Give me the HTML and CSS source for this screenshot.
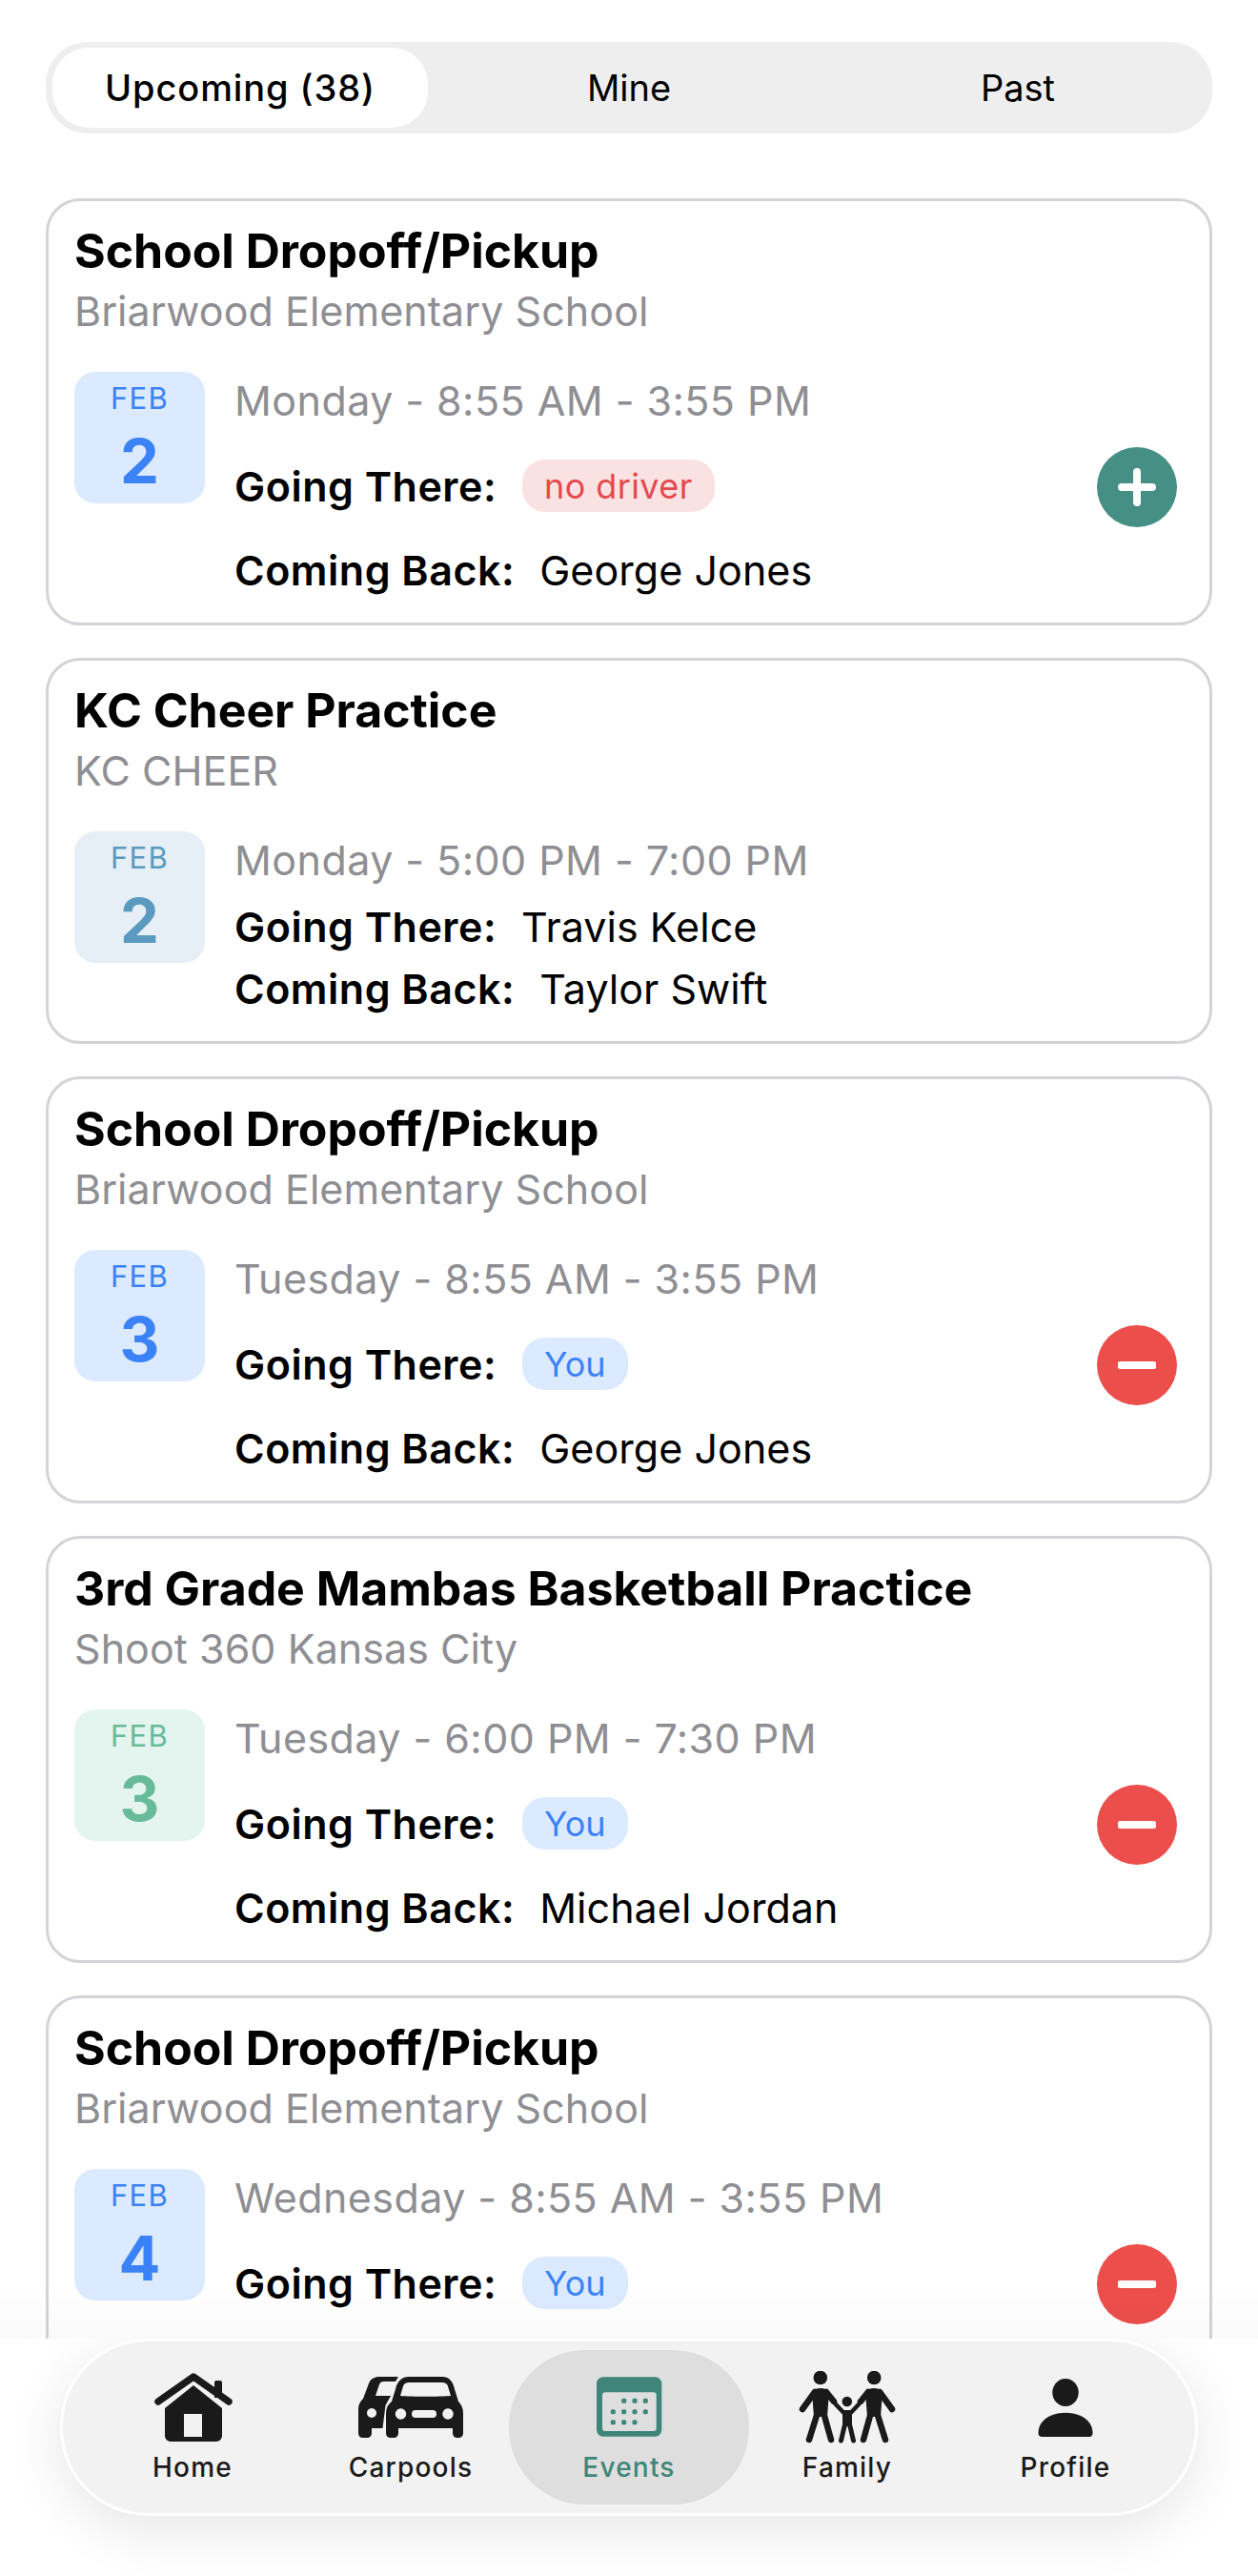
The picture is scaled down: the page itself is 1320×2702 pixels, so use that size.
FILE: index.html
```html
<!DOCTYPE html>
<html lang="en">
<head>
<meta charset="utf-8">
<title>Events</title>
<link rel="stylesheet" href="styles.css">
</head>
<body>
<div class="app">
  <main class="scroll">
    <nav class="segment">
      <div class="seg-item active">Upcoming (38)</div>
      <div class="seg-item">Mine</div>
      <div class="seg-item">Past</div>
    </nav>
    <div class="cards">
      <article class="card">
        <h2 class="title">School Dropoff/Pickup</h2>
        <p class="place">Briarwood Elementary School</p>
        <div class="body">
          <div class="date blue"><span class="mon">FEB</span><span class="day">2</span></div>
          <div class="info tall">
            <div class="when">Monday - 8:55 AM - 3:55 PM</div>
            <div class="row"><b>Going There:</b><span class="pill red">no driver</span></div>
            <div class="row"><b>Coming Back:</b><span class="name">George Jones</span></div>
          </div>
          <button class="act add"><svg viewBox="0 0 40 40" width="40" height="40"><path d="M4 20h32M20 4v32"/></svg></button>
        </div>
      </article>
      <article class="card">
        <h2 class="title">KC Cheer Practice</h2>
        <p class="place">KC CHEER</p>
        <div class="body">
          <div class="date steel"><span class="mon">FEB</span><span class="day">2</span></div>
          <div class="info">
            <div class="when">Monday - 5:00 PM - 7:00 PM</div>
            <div class="row"><b>Going There:</b><span class="name">Travis Kelce</span></div>
            <div class="row"><b>Coming Back:</b><span class="name">Taylor Swift</span></div>
          </div>
        </div>
      </article>
      <article class="card">
        <h2 class="title">School Dropoff/Pickup</h2>
        <p class="place">Briarwood Elementary School</p>
        <div class="body">
          <div class="date blue"><span class="mon">FEB</span><span class="day">3</span></div>
          <div class="info tall">
            <div class="when">Tuesday - 8:55 AM - 3:55 PM</div>
            <div class="row"><b>Going There:</b><span class="pill you">You</span></div>
            <div class="row"><b>Coming Back:</b><span class="name">George Jones</span></div>
          </div>
          <button class="act remove"><svg viewBox="0 0 40 40" width="40" height="40"><path d="M3 20h34"/></svg></button>
        </div>
      </article>
      <article class="card">
        <h2 class="title">3rd Grade Mambas Basketball Practice</h2>
        <p class="place">Shoot 360 Kansas City</p>
        <div class="body">
          <div class="date green"><span class="mon">FEB</span><span class="day">3</span></div>
          <div class="info tall">
            <div class="when">Tuesday - 6:00 PM - 7:30 PM</div>
            <div class="row"><b>Going There:</b><span class="pill you">You</span></div>
            <div class="row"><b>Coming Back:</b><span class="name">Michael Jordan</span></div>
          </div>
          <button class="act remove"><svg viewBox="0 0 40 40" width="40" height="40"><path d="M3 20h34"/></svg></button>
        </div>
      </article>
      <article class="card under-tabbar">
        <h2 class="title">School Dropoff/Pickup</h2>
        <p class="place">Briarwood Elementary School</p>
        <div class="body">
          <div class="date blue"><span class="mon">FEB</span><span class="day">4</span></div>
          <div class="info tall">
            <div class="when">Wednesday - 8:55 AM - 3:55 PM</div>
            <div class="row"><b>Going There:</b><span class="pill you">You</span></div>
          </div>
          <button class="act remove"><svg viewBox="0 0 40 40" width="40" height="40"><path d="M3 20h34"/></svg></button>
        </div>
      </article>
    </div>
  </main>
  <footer class="footer">
    <nav class="tabbar">
      <a class="tab">
        <svg class="ico" viewBox="0 0 90 80" width="90" height="80"><path fill="#1a1a1a" fill-rule="evenodd" d="M16 39 46 15 76 39V68a6 6 0 0 1-6 6H22a6 6 0 0 1-6-6ZM36 45V69H55V45Z"/><path fill="#1a1a1a" d="M68 12a2 2 0 0 1 2-2h4a2 2 0 0 1 2 2V28H68Z"/><path fill="none" stroke="#1a1a1a" stroke-width="7.500" stroke-linecap="round" stroke-linejoin="round" d="M9 32 46 6 83 32"/></svg>
        <span>Home</span>
      </a>
      <a class="tab">
        <svg class="ico" viewBox="0 0 110 80" width="110" height="80"><path fill="#1a1a1a" fill-rule="evenodd" d="M0 65V40C0 35 2 32 5 29L11 13C13 8 17 6 22 6H42L39 11H27C24 11 23 12 22 14L18 26H34L28.500 36 25.500 60H14V65C14 68 12 70 9 70H5C2 70 0 68 0 65ZM14 39a5 5 0 1 0 .01 0Z"/><path fill="#1a1a1a" fill-rule="evenodd" d="M29 44C29 39 31 35 35 32L39 19C41 10 46 6 53 6H88C95 6 99 10 101 19L105 32C108 35 110 39 110 44V65C110 68 108 70 105 70H104C101 70 99 68 99 65V60H42V65C42 68 40 70 37 70H34C31 70 29 68 29 65ZM53 12C50 12 48 13 47 16L44 26C55 27 86 27 97 26L94 16C93 13 91 12 88 12ZM44.500 39.300a5.700 5.700 0 1 0 .01 0ZM94 39.300a5.700 5.700 0 1 0 .01 0ZM60 41a4 4 0 0 0 0 8H78a4 4 0 0 0 0-8Z"/></svg>
        <span>Carpools</span>
      </a>
      <a class="tab current">
        <svg class="ico" viewBox="0 0 80 80" width="80" height="80"><path fill="#3f8579" fill-rule="evenodd" d="M13 6.300H67.300a7 7 0 0 1 7 7V61.700a7 7 0 0 1-7 7H13a7 7 0 0 1-7-7V13.300a7 7 0 0 1 7-7ZM15 22.300a3 3 0 0 0-3 3V60a3 3 0 0 0 3 3H65.700a3 3 0 0 0 3-3V25.300a3 3 0 0 0-3-3Z"/><g fill="#3f8579"><rect x="32.200" y="28.800" width="5" height="5" rx="1.500"/><rect x="43.500" y="28.800" width="5" height="5" rx="1.500"/><rect x="54.800" y="28.800" width="5" height="5" rx="1.500"/><rect x="20.800" y="40.200" width="5" height="5" rx="1.500"/><rect x="32.200" y="40.200" width="5" height="5" rx="1.500"/><rect x="43.500" y="40.200" width="5" height="5" rx="1.500"/><rect x="54.800" y="40.200" width="5" height="5" rx="1.500"/><rect x="20.800" y="51.200" width="5" height="5" rx="1.500"/><rect x="32.200" y="51.200" width="5" height="5" rx="1.500"/><rect x="43.500" y="51.200" width="5" height="5" rx="1.500"/></g></svg>
        <span>Events</span>
      </a>
      <a class="tab">
        <svg class="ico" viewBox="0 0 104 80" width="104" height="80"><g fill="#1a1a1a"><circle cx="23.800" cy="7" r="7.300"/><circle cx="80.200" cy="7" r="7.300"/><circle cx="51.800" cy="32" r="5.300"/><path d="M15 22C17 19 20 18 24 18S31 19 33 22L31 48H17Z"/><path d="M89 22C87 19 84 18 80 18S73 19 71 22L73 48H87Z"/><path d="M47 41H57V58H47Z"/></g><g fill="none" stroke="#1a1a1a" stroke-linecap="round" stroke-linejoin="round"><path stroke-width="6.500" d="M18 22 5 40M30 22 38 32M20.500 45 12 72M27.500 45 35 72"/><path stroke-width="6.500" d="M86 22 99 40M74 22 66 32M83.500 45 92 72M76.500 45 69 72"/><path stroke-width="4.500" d="M40 35 48.500 44M64 35 55.500 44"/><path stroke-width="5" d="M49.500 56 45.500 73M54.500 56 58.500 73"/></g></svg>
        <span>Family</span>
      </a>
      <a class="tab">
        <svg class="ico" viewBox="0 0 60 80" width="60" height="80"><g fill="#1a1a1a"><ellipse cx="30" cy="22.500" rx="13.700" ry="14.600"/><path d="M1.500 65C1.500 52 14 43.700 30 43.700S58.500 52 58.500 65C58.500 67.500 57 69 55 69H5C3 69 1.500 67.500 1.500 65Z"/></g></svg>
        <span>Profile</span>
      </a>
    </nav>
  </footer>
</div>
</body>
</html>
```
FILE: styles.css
```css
* { box-sizing: border-box; }
html, body { margin: 0; padding: 0; background: #fff; }
body { font-family: Inter, "Liberation Sans", sans-serif; color: #000; }
.app { width: 1320px; height: 2702px; overflow: hidden; }

.scroll { height: 2453px; overflow: hidden; padding: 44px 48px 0; position: relative; }
.scroll::after { content: ""; position: absolute; left: 0; right: 0; bottom: 0; height: 60px; background: linear-gradient(rgba(0,0,0,0), rgba(0,0,0,.02)); }

.segment { display: grid; grid-template-columns: repeat(3, 1fr); height: 96px; padding: 6px 0; background: #eeeeee; border-radius: 44px; }
.seg-item { display: flex; align-items: center; justify-content: center; font-size: 38px; font-weight: 400; letter-spacing: 0; border-radius: 38px; }
.seg-item.active { background: #fff; margin: 0 7px; font-weight: 500; letter-spacing: 0.9px; }

.cards { display: flex; flex-direction: column; gap: 34px; margin-top: 68px; }
.card { border: 3px solid #d4d4d8; border-radius: 36px; padding: 22px 27px 23px; background: #fff; }
.under-tabbar { min-height: 449px; }
.title { margin: 0; font-size: 50px; line-height: 60px; font-weight: 700; letter-spacing: -0.05px; }
.place { margin: 3px 0 0; font-size: 43px; line-height: 60px; color: #8e8e93; letter-spacing: 0.05px; }

.body { display: flex; align-items: flex-start; margin-top: 34px; position: relative; }
.date { flex: none; width: 137px; height: 138px; border-radius: 22px; display: flex; flex-direction: column; align-items: center; }
.mon { font-size: 31px; line-height: 36px; margin-top: 10px; letter-spacing: 1.2px; }
.day { font-size: 65px; line-height: 76px; font-weight: 700; margin-top: 10px; }
.blue { background: #dbeafe; color: #3b82f6; }
.steel { background: #e5eff5; color: #5b9abf; }
.green { background: #e4f4ee; color: #68bb9a; }

.info { margin-left: 31px; flex: 1; }
.when { font-size: 43px; line-height: 60px; color: #8e8e93; letter-spacing: 0.45px; }
.row { display: flex; align-items: center; font-size: 43px; height: 65px; }
.row b { font-weight: 600; letter-spacing: 0.5px; }
.when + .row { margin-top: 7px; }
.tall .when + .row { margin-top: 27px; }
.tall .row + .row { margin-top: 23px; }
.name { margin-left: 26px; letter-spacing: 0.05px; }
.pill { margin-left: 27px; height: 55px; padding: 0 23px; border-radius: 24px; display: flex; align-items: center; font-size: 36px; }
.pill.red { background: #fbe2e2; color: #e5484d; letter-spacing: 0.4px; }
.pill.you { background: #dbeafe; color: #3b82f6; }

.act { position: absolute; right: 7px; top: 79px; width: 84px; height: 84px; border: 0; padding: 0; border-radius: 50%; display: flex; align-items: center; justify-content: center; }
.act svg { fill: none; stroke: #fff; stroke-width: 8; stroke-linecap: round; }
.add { background: #468f85; }
.remove { background: #ec4e4b; }

.footer { height: 249px; overflow: hidden; background: #fff; }
.tabbar { margin: 0 63px; height: 186px; padding: 9px 0; background: #f2f2f2; border: 3px solid #fff; border-radius: 92px; box-shadow: 0 14px 56px rgba(0,0,0,.1); display: grid; grid-template-columns: repeat(5, 229px); justify-content: center; }
.tab { display: flex; flex-direction: column; align-items: center; padding-top: 22px; border-radius: 80px; font-size: 28px; font-weight: 500; letter-spacing: 1.2px; color: #1a1a1a; }
.tab .ico { margin-bottom: 4px; flex: none; }
.tab span { line-height: 34px; }
.current { margin: 0 -11.5px; background: #dedede; color: #3f8579; }
```
